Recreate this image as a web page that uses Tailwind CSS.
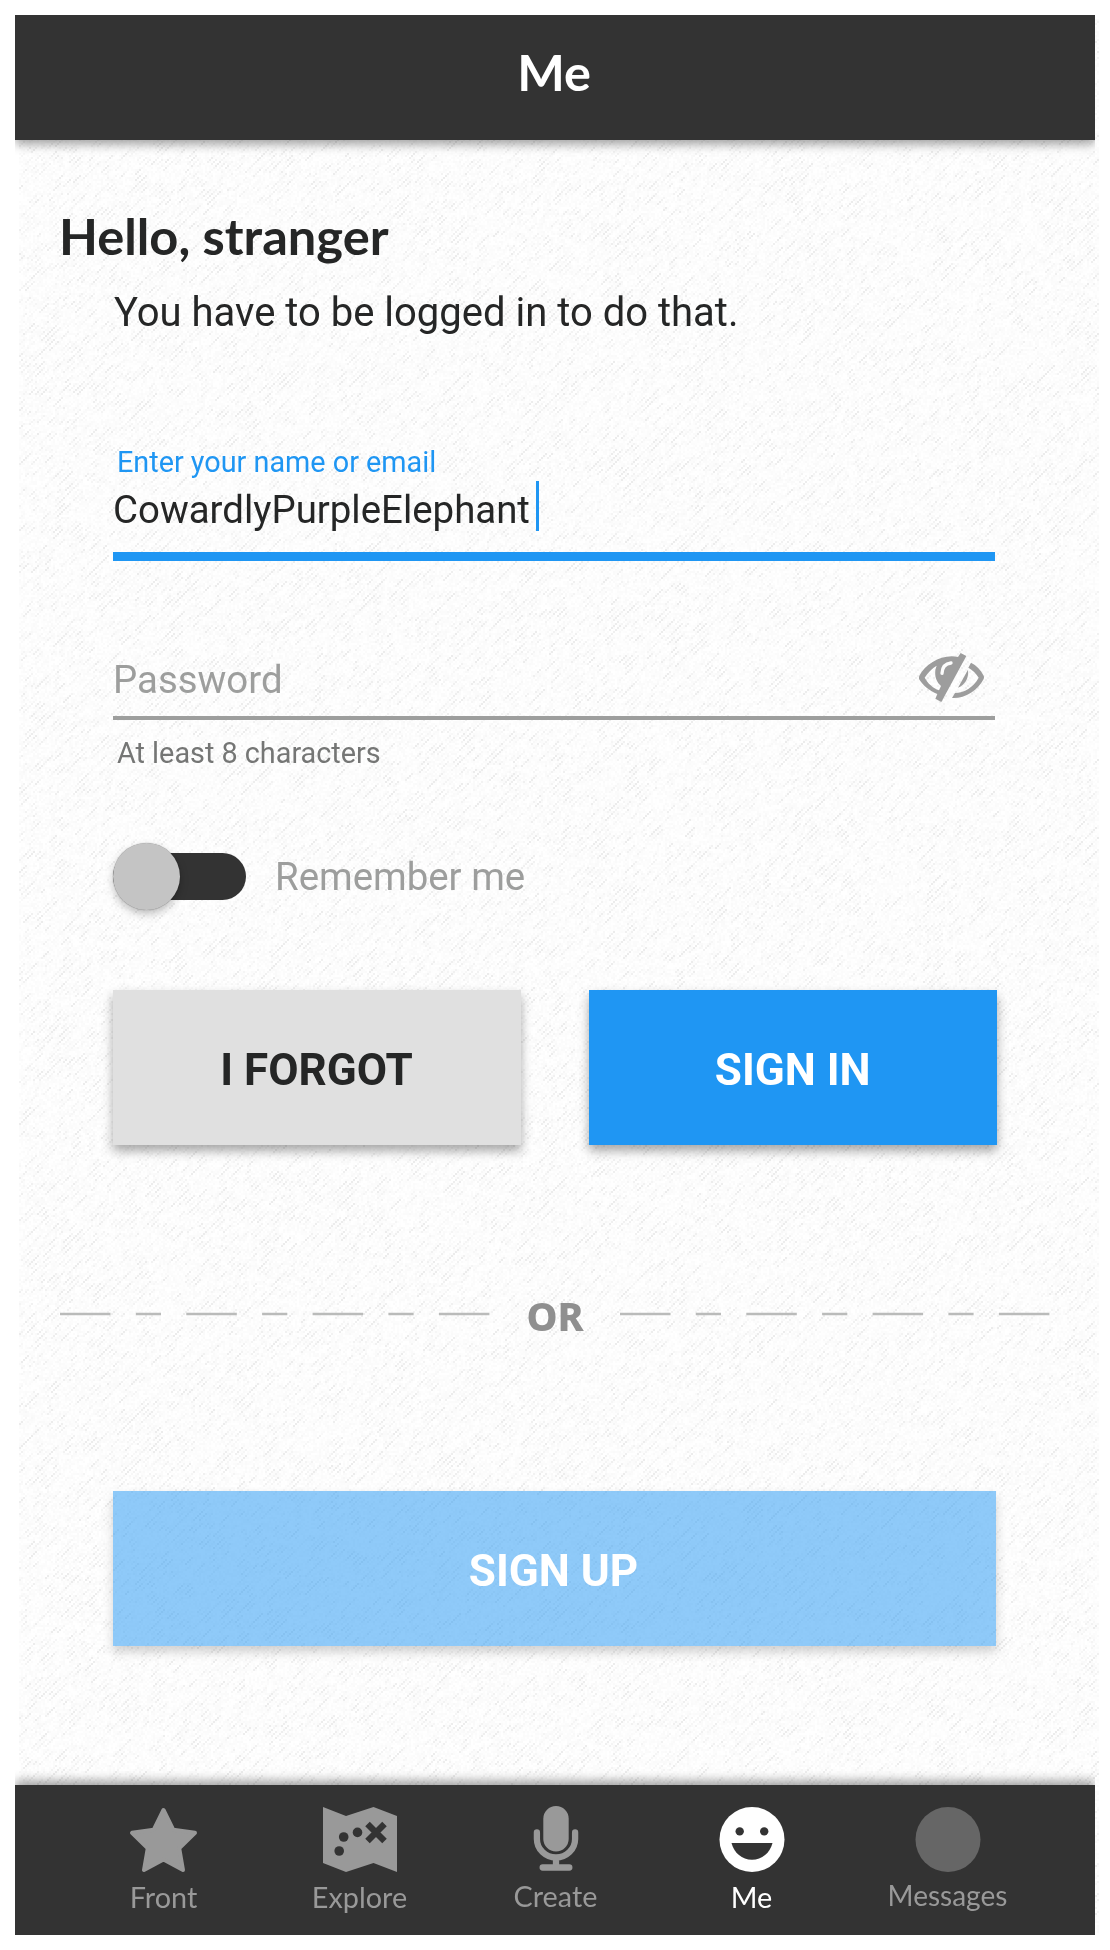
<!DOCTYPE html>
<html lang="en">
<head>
<meta charset="utf-8">
<title>Me</title>
<script src="https://cdn.jsdelivr.net/npm/@tailwindcss/browser@4"></script>
</head>
<body class="relative h-[1950px] w-[1110px] overflow-hidden bg-white font-['Roboto',sans-serif] text-[#252626]">
<!-- paper texture behind the screen -->
<canvas id="paper" width="540" height="958" class="absolute left-[19px] top-[19px] h-[1916px] w-[1080px] [image-rendering:pixelated]"></canvas>

<div class="relative mx-[15px] flex flex-col pt-[15px]">
  <header class="flex h-[125px] items-center justify-center bg-[#333333] pb-[12px] pr-[2px] shadow-[0_4px_10px_rgba(0,0,0,0.38)] [clip-path:inset(0_0_-20px_0)]">
    <h1 class="font-['Lato',sans-serif] text-[50.4px] font-bold leading-[60px] text-white">Me</h1>
  </header>

  <main class="flex h-[1645px] flex-col pt-[66px]">
    <h2 class="pl-[44px] font-['Lato',sans-serif] text-[50.6px] font-bold leading-[60px]">Hello, stranger</h2>
    <p class="mt-[22px] pl-[99px] text-[40px] leading-[50px]">You have to be logged in to do that.</p>

    <form class="mt-[107px] flex flex-col px-[98px]">
      <label class="pl-[4px] text-[28.8px] leading-[34px] text-[#1f96f3]">Enter your name or email</label>
      <div class="mt-[2px] flex h-[50px] items-center">
        <span class="pt-[7px] text-[38.4px] leading-[43px]">CowardlyPurpleElephant</span>
        <span class="ml-[6px] h-[50px] w-[3px] bg-[#1f96f3]"></span>
      </div>
      <div class="mt-[21px] h-[9px] w-[882px] bg-[#1f96f3]"></div>

      <div class="mt-[91px] flex h-[64px] w-[882px] items-start justify-between pr-[11px]">
        <span class="pt-[5px] text-[38.4px] leading-[46px] text-[#9d9e9d]">Password</span>
        <svg class="mt-px h-[49px] w-[65px]" viewBox="87 99 195 147" fill="none">
          <path fill="#9d9d9d" fill-rule="evenodd" d="M212 99 229 108 154 246 136 236 142 222C119 213 98 196 87 177Q86 173 88 167C108 130 158 101 204 111ZM140 137C126 145 113 158 104 173 113 190 129 204 147 211L153 198C134 182 132 156 140 137Z"/>
          <path stroke="#fcfcfc" stroke-width="10" stroke-linecap="round" d="M156 160Q157 132 183 129"/>
          <path fill="#9d9d9d" d="M243 128C259 136 272 149 281 167Q283 172 281 177C263 213 224 236 186 234L195 219C223 218 250 202 266 173 258 160 248 150 235 143Z"/>
          <path fill="#9d9d9d" d="M234 149C237 173 226 194 204 203Z"/>
        </svg>
      </div>
      <div class="h-[4px] w-[882px] bg-[#9d9e9d]"></div>
      <p class="mt-[16px] pl-[4px] text-[28.8px] leading-[34px] text-[#757675]">At least 8 characters</p>

      <div class="mt-[72px] flex h-[68px] items-center">
        <div class="flex h-[47px] w-[133px] items-center rounded-full bg-[#333333]">
          <span class="size-[67px] shrink-0 rounded-full bg-[#c4c4c4] shadow-[0_4px_9px_rgba(0,0,0,0.25),0_0_1px_rgba(0,0,0,0.5)]"></span>
        </div>
        <span class="pl-[29px] pt-[2px] text-[38.4px] leading-[46px] text-[#9d9e9d]">Remember me</span>
      </div>

      <div class="mt-[80px] flex gap-[68px]">
        <button type="button" class="h-[155px] w-[408px] bg-[#e0e0e0] pr-[1px] pt-[5px] text-[44px] font-bold shadow-[0_6px_10px_rgba(0,0,0,0.34)]">I FORGOT</button>
        <button type="button" class="h-[155px] w-[407.5px] bg-[#1f96f3] pt-[5px] text-[44px] font-bold text-white shadow-[0_6px_10px_rgba(0,0,0,0.34)]">SIGN IN</button>
      </div>
    </form>

    <div class="mt-[146px] flex h-[50px] items-start justify-between px-[45px]">
      <svg class="h-[50px] w-[430px]" fill="none" stroke="#babbba" stroke-width="2.4"><path stroke-dasharray="50.5 25.3 25.2 25.3" d="M0 23h430"/></svg>
      <span class="font-['Noto_Sans',sans-serif] text-[39.2px] font-extrabold leading-[50px] text-[#8f8f8f]">OR</span>
      <svg class="h-[50px] w-[430px]" fill="none" stroke="#babbba" stroke-width="2.4"><path stroke-dasharray="50.5 25.3 25.2 25.3" d="M0 23h430"/></svg>
    </div>

    <button type="button" class="ml-[98px] mt-[150px] h-[155px] w-[883px] bg-[#1f96f3]/50 pr-[2px] pt-[5px] text-[44px] font-bold text-white shadow-[0_6px_10px_rgba(0,0,0,0.18)]">SIGN UP</button>
  </main>

  <nav class="flex h-[150px] justify-center bg-[#333333] pl-[1px] pt-[21px] font-['Lato',sans-serif] text-[28.8px] leading-[34px] text-[#999999] shadow-[0_-4px_10px_rgba(0,0,0,0.38)] [clip-path:inset(-20px_0_0_0)]">
    <a class="flex w-[196px] flex-col items-center gap-[7px]">
      <svg class="h-[67px] w-[69px]" viewBox="0 0 69 67"><path fill="#999999" stroke="#999999" stroke-width="4" stroke-linejoin="round" d="M34.5 4 44.2 23.7 66 26.8 50.2 42.2 54 64 34.5 53.6 15 64 18.8 42.2 3 26.8 24.8 23.7Z"/></svg>
      <span>Front</span>
    </a>
    <a class="flex w-[196px] flex-col items-center gap-[7px]">
      <svg class="h-[67px] w-[74px]" viewBox="0 0 74 67">
        <path fill="#999999" d="M0 1 23 10 50.5 1 74 10V66L50.5 57 23 66 0 57Z"/>
        <g fill="#333333"><circle cx="16.2" cy="45" r="4.8"/><circle cx="20.7" cy="31" r="4.8"/><circle cx="34.5" cy="26.4" r="4.8"/></g>
        <path stroke="#333333" stroke-width="6.4" d="M44.500 18 61.500 35M61.500 18 44.500 35"/>
      </svg>
      <span>Explore</span>
    </a>
    <a class="flex w-[196px] flex-col items-center gap-[6px]">
      <svg class="h-[67px] w-[46px]" viewBox="0 0 46 67">
        <rect x="10.3" y="0" width="25.4" height="45.5" rx="12.7" fill="#999999"/>
        <path fill="none" stroke="#999999" stroke-width="6.3" stroke-linecap="round" d="M3.900 26.500V33A19.100 18.500 0 0 0 42.100 33V26.500M23 52V60M9.700 61.500H36.300"/>
      </svg>
      <span>Create</span>
    </a>
    <a class="flex w-[196px] flex-col items-center gap-[7px] text-white">
      <svg class="h-[67px] w-[66px]" viewBox="0 0 66 67">
        <circle cx="33" cy="33.5" r="32.5" fill="#ffffff"/>
        <g fill="#333333"><circle cx="20.7" cy="25.4" r="4.2"/><circle cx="45.2" cy="25.4" r="4.2"/><path d="M12.500 37H53.500C51 47 43 53.700 33 53.700S15 47 12.500 37Z"/></g>
      </svg>
      <span>Me</span>
    </a>
    <a class="flex w-[196px] flex-col items-center gap-[5px]">
      <svg class="h-[67px] w-[66px]" viewBox="0 0 66 67"><circle cx="33" cy="33.5" r="32.5" fill="#666666"/></svg>
      <span class="text-[28px]">Messages</span>
    </a>
  </nav>
</div>

<script>
// Paper grain: faint noise plus short diagonal streaks, from a fixed seed.
const paper = document.getElementById('paper'), g = paper.getContext('2d');
const W = paper.width, H = paper.height, img = g.createImageData(W, H);
let seed = 7;
const rnd = () => (seed = (seed * 1664525 + 1013904223) >>> 0) / 4294967296;
const v = new Float32Array(W * H);
for (let i = 0; i < v.length; i++) v[i] = 256 - rnd() * 6;
for (let n = 0; n < 42000; n++) {
  let x = Math.floor(rnd() * W), y = Math.floor(rnd() * H);
  x -= (x + y) % 3;
  const len = 1 + rnd() * 3, dark = 5 + rnd() * 9;
  for (let k = 0; k < len; k++) {
    const px = x + k, py = y - k;
    if (px >= 0 && px < W && py >= 0) v[py * W + px] -= dark * (0.4 + rnd() * 0.6);
  }
}
for (let i = 0; i < v.length; i++) {
  const c = Math.max(236, v[i]);
  img.data.set([c, c, c, 255], i * 4);
}
g.putImageData(img, 0, 0);
</script>
</body>
</html>
